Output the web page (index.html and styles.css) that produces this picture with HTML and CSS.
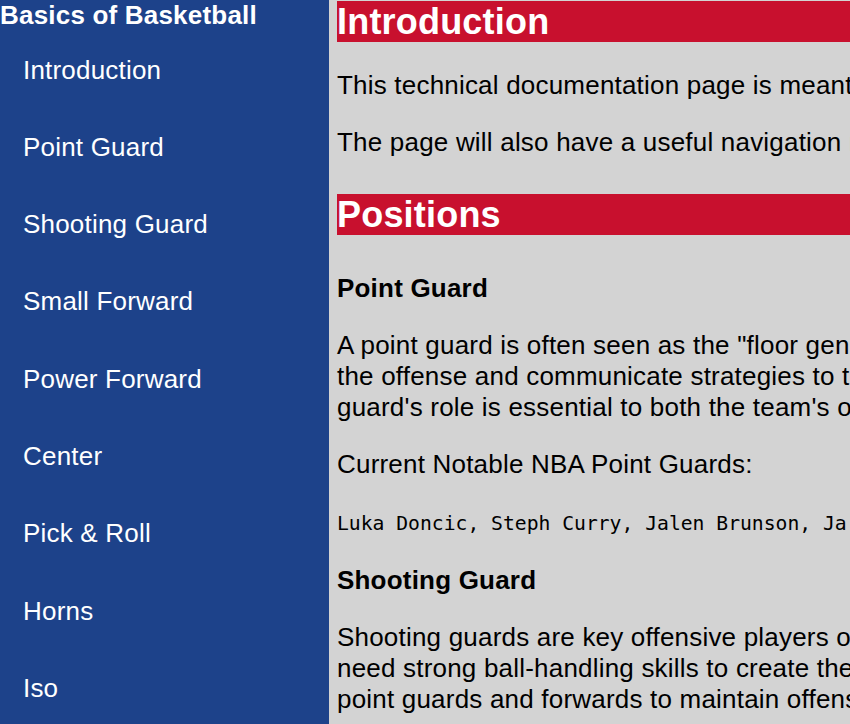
FILE: index.html
```html
<!DOCTYPE html>
<html lang="en">
<head>
<meta charset="utf-8">
<title>Basics of Basketball</title>
<link rel="stylesheet" href="styles.css">
</head>
<body>
<div class="page">
  <nav class="navbar" id="navbar">
    <header class="nav-title">Basics of Basketball</header>
    <ul class="nav-list">
      <li><a class="nav-link" href="#Introduction">Introduction</a></li>
      <li><a class="nav-link" href="#Point_Guard">Point Guard</a></li>
      <li><a class="nav-link" href="#Shooting_Guard">Shooting Guard</a></li>
      <li><a class="nav-link" href="#Small_Forward">Small Forward</a></li>
      <li><a class="nav-link" href="#Power_Forward">Power Forward</a></li>
      <li><a class="nav-link" href="#Center">Center</a></li>
      <li><a class="nav-link" href="#Pick_Roll">Pick &amp; Roll</a></li>
      <li><a class="nav-link" href="#Horns">Horns</a></li>
      <li><a class="nav-link" href="#Iso">Iso</a></li>
    </ul>
  </nav>
  <main class="main-doc" id="main-doc">
    <section class="main-section intro" id="Introduction">
      <h1 class="section-title">Introduction</h1>
      <p>This technical documentation page is meant to teach the basics of basketball positions and plays.</p>
      <p>The page will also have a useful navigation menu so you can jump to any topic quickly.</p>
    </section>
    <section class="main-section" id="Positions">
      <h1 class="section-title">Positions</h1>
      <div class="position-list">
        <article class="position" id="Point_Guard">
          <h3 class="position-title">Point Guard</h3>
          <p>A point guard is often seen as the "floor general" of the team. They bring the ball up the court, run<br>the offense and communicate strategies to their teammates while reading the defense. The point<br>guard's role is essential to both the team's offensive and defensive success.</p>
          <p>Current Notable NBA Point Guards:</p>
          <p><code>Luka Doncic, Steph Curry, Jalen Brunson, Ja Morant</code></p>
        </article>
        <article class="position" id="Shooting_Guard">
          <h3 class="position-title">Shooting Guard</h3>
          <p>Shooting guards are key offensive players often tasked with scoring from the perimeter. They<br>need strong ball-handling skills to create their own shots and must work well together with<br>point guards and forwards to maintain offensive flow.</p>
        </article>
      </div>
    </section>
  </main>
</div>
</body>
</html>
```

FILE: styles.css
```css
html, body {
  margin: 0;
  padding: 0;
  overflow: hidden;
}

body {
  font-family: "Liberation Sans", Arial, sans-serif;
  font-size: 26px;
  letter-spacing: 0.2px;
  color: #000;
  background: #d3d3d3;
}

.page {
  display: flex;
  align-items: flex-start;
  width: 2600px;
  min-height: 724px;
}

.navbar {
  width: 329px;
  flex: 0 0 329px;
  min-height: 724px;
  background: #1d428a;
  color: #fff;
}

.nav-title {
  font-weight: bold;
  font-size: 26px;
  line-height: 30px;
}

.nav-list {
  list-style: none;
  margin: 24.5px 0 0;
  padding: 0 0 0 23px;
  display: flex;
  flex-direction: column;
  gap: 47.3px;
}

.nav-link {
  display: block;
  color: #fff;
  text-decoration: none;
  line-height: 30px;
}

.main-doc {
  flex: 1;
  padding: 1px 0 0 8px;
  background: #d3d3d3;
}

.main-section {
  padding-bottom: 10px;
}

.section-title {
  margin: 0 0 28px;
  font-size: 36px;
  line-height: 41px;
  font-weight: bold;
  color: #fff;
  background: #c8102e;
}

.main-doc p {
  margin: 0 0 26px;
  line-height: 31px;
}

.position-list {
  padding-top: 10px;
}

.position-title {
  margin: 0 0 26px;
  font-size: 26px;
  line-height: 31px;
  font-weight: bold;
}

code {
  font-family: "DejaVu Sans Mono", monospace;
  font-size: 19.7px;
  letter-spacing: 0;
}
```
